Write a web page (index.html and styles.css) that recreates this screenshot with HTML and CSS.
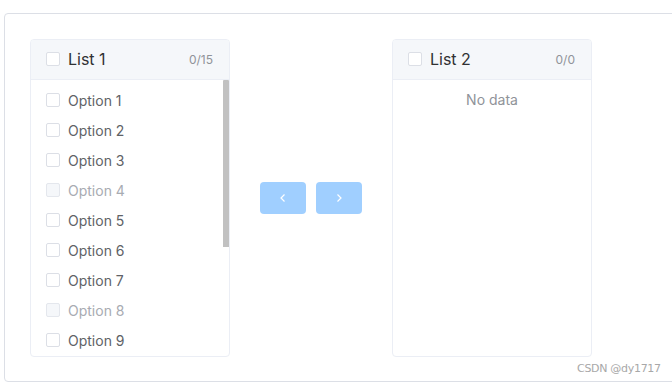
FILE: index.html
```html
<!DOCTYPE html>
<html>
<head>
<meta charset="utf-8">
<link rel="stylesheet" href="styles.css">
</head>
<body>
<div class="page">
  <div class="frame">
    <div class="transfer">
      <div class="panel">
        <div class="panel-header">
          <span class="cb"></span>
          <span class="title">List 1</span>
          <span class="count">0/15</span>
        </div>
        <div class="panel-body">
          <div class="list">
            <div class="item"><span class="cb"></span><span>Option 1</span></div>
            <div class="item"><span class="cb"></span><span>Option 2</span></div>
            <div class="item"><span class="cb"></span><span>Option 3</span></div>
            <div class="item disabled"><span class="cb"></span><span>Option 4</span></div>
            <div class="item"><span class="cb"></span><span>Option 5</span></div>
            <div class="item"><span class="cb"></span><span>Option 6</span></div>
            <div class="item"><span class="cb"></span><span>Option 7</span></div>
            <div class="item disabled"><span class="cb"></span><span>Option 8</span></div>
            <div class="item"><span class="cb"></span><span>Option 9</span></div>
          </div>
          <div class="scrollbar"></div>
        </div>
      </div>
      <div class="buttons">
        <button class="btn"><svg width="14" height="14" viewBox="0 0 14 14"><path d="M8.5 3.5 L5 7 L8.5 10.5" fill="none" stroke="#fff" stroke-width="1.2"/></svg></button>
        <button class="btn"><svg width="14" height="14" viewBox="0 0 14 14"><path d="M5.5 3.5 L9 7 L5.5 10.5" fill="none" stroke="#fff" stroke-width="1.2"/></svg></button>
      </div>
      <div class="panel">
        <div class="panel-header">
          <span class="cb"></span>
          <span class="title">List 2</span>
          <span class="count">0/0</span>
        </div>
        <div class="panel-body">
          <div class="empty">No data</div>
        </div>
      </div>
    </div>
  </div>
  <div class="watermark">CSDN @dy1717</div>
</div>
</body>
</html>
```
FILE: styles.css
```css
* { box-sizing: border-box; }
html, body { margin: 0; padding: 0; background: #fff; }
body { font-family: Inter, "Noto Sans", sans-serif; }
.page { position: relative; width: 672px; height: 383px; padding: 13px 0 0 4px; overflow: hidden; }
.frame {
  width: 700px;
  height: 369px;
  border: 1px solid #dcdfe6;
  border-radius: 4px;
  padding: 25px;
}
.transfer { display: flex; align-items: center; }
.panel {
  width: 200px;
  height: 318px;
  border: 1px solid #ebeef5;
  border-radius: 4px;
  overflow: hidden;
  display: flex;
  flex-direction: column;
  background: #fff;
}
.panel-header {
  height: 40px;
  flex: none;
  background: #f5f7fa;
  border-bottom: 1px solid #ebeef5;
  display: flex;
  align-items: center;
  padding: 0 16px 1px 15px;
}
.cb {
  width: 14px;
  height: 14px;
  border: 1px solid #dcdfe6;
  border-radius: 2px;
  background: #fff;
  flex: none;
  margin-right: 8px;
}
.title { font-size: 16px; color: #303133; flex: 1; }
.count { font-size: 12px; color: #909399; }
.panel-body { position: relative; flex: 1; overflow: hidden; }
.list { padding: 5px 0; }
.item {
  height: 30px;
  display: flex;
  align-items: center;
  padding-left: 15px;
  font-size: 14px;
  color: #606266;
}
.item.disabled { color: #a8abb2; }
.item.disabled .cb { background: #f5f7fa; border-color: #e4e7ed; }
.scrollbar {
  position: absolute;
  right: 0;
  top: 0;
  width: 6px;
  height: 167px;
  background: #c1c1c1;
  border-radius: 1px 1px 0 0;
}
.empty {
  text-align: center;
  font-size: 14px;
  color: #909399;
  line-height: 30px;
  margin-top: 5px;
}
.buttons { display: flex; gap: 10px; margin: 0 30px; }
.btn {
  width: 46px;
  height: 32px;
  border: none;
  border-radius: 4px;
  background: #a0cfff;
  display: flex;
  align-items: center;
  justify-content: center;
  padding: 0;
}
.watermark {
  position: absolute;
  left: 577px;
  top: 362px;
  font-family: "DejaVu Sans", sans-serif;
  font-size: 11px;
  color: #a8a8a8;
  letter-spacing: -0.3px;
}
```
